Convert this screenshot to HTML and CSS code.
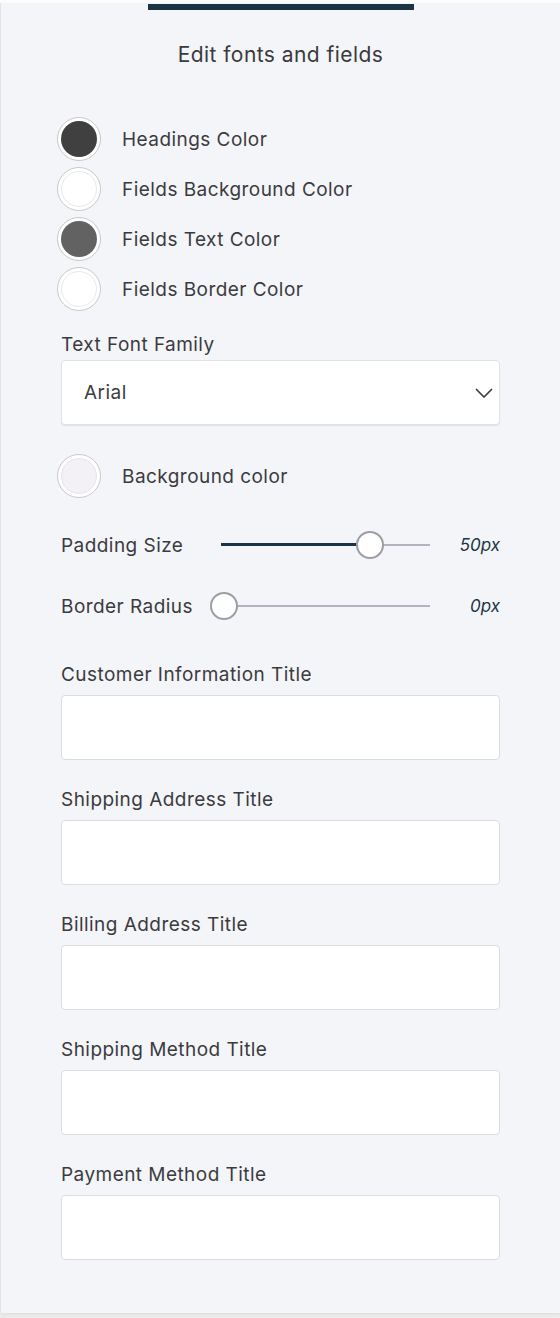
FILE: index.html
```html
<!DOCTYPE html>
<html lang="en">

<head>
    <meta charset="UTF-8">
    <meta name="viewport" content="width=device-width, initial-scale=1.0">
    <title>Edit fonts and fields</title>

    <link rel="stylesheet" href="styles.css">
</head>

<body>

    <main class="panel">
        <div class="tab-bar"></div>
        <h2>Edit fonts and fields</h2>

        <!-- Color pickers -->
        <div class="swatches">
            <div class="swatch-row">
                <span class="swatch"><span class="dot dark"></span></span>
                <span class="swatch-label">Headings Color</span>
            </div>
            <div class="swatch-row">
                <span class="swatch"><span class="dot white"></span></span>
                <span class="swatch-label">Fields Background Color</span>
            </div>
            <div class="swatch-row">
                <span class="swatch"><span class="dot grey"></span></span>
                <span class="swatch-label">Fields Text Color</span>
            </div>
            <div class="swatch-row">
                <span class="swatch"><span class="dot white"></span></span>
                <span class="swatch-label">Fields Border Color</span>
            </div>
        </div>

        <label class="field-label font-label">Text Font Family</label>
        <div class="select">
            <span>Arial</span>
            <svg width="18" height="10" viewBox="0 0 18 10">
                <polyline points="1,1 9,9 17,1" fill="none" stroke="#3a3a3c" stroke-width="1.6" />
            </svg>
        </div>

        <div class="swatch-row bg-row">
            <span class="swatch"><span class="dot light"></span></span>
            <span class="swatch-label">Background color</span>
        </div>

        <!-- Sliders -->
        <div class="slider-row">
            <span class="slider-label">Padding Size</span>
            <div class="slider">
                <div class="track"></div>
                <div class="fill" style="width: 149px"></div>
                <div class="thumb" style="left: 146px"></div>
            </div>
            <span class="slider-value">50px</span>
        </div>
        <div class="slider-row">
            <span class="slider-label">Border Radius</span>
            <div class="slider">
                <div class="track"></div>
                <div class="thumb" style="left: 0px"></div>
            </div>
            <span class="slider-value">0px</span>
        </div>

        <!-- Titles -->
        <div class="titles">
            <div class="form-input">
                <label class="field-label">Customer Information Title</label>
                <input type="text">
            </div>
            <div class="form-input">
                <label class="field-label">Shipping Address Title</label>
                <input type="text">
            </div>
            <div class="form-input">
                <label class="field-label">Billing Address Title</label>
                <input type="text">
            </div>
            <div class="form-input">
                <label class="field-label">Shipping Method Title</label>
                <input type="text">
            </div>
            <div class="form-input">
                <label class="field-label">Payment Method Title</label>
                <input type="text">
            </div>
        </div>
    </main>

</body>

</html>
```

FILE: styles.css
```css
* {
    box-sizing: border-box;
    padding: 0;
    margin: 0;
}

body {
    background: linear-gradient(#fdfdfd 3px, #ebebeb 3px);
    min-height: 100vh;
    padding-top: 3px;
    font-family: 'Inter', 'Roboto', sans-serif;
    letter-spacing: 0.45px;
    color: #3b3b3e;
}

.panel {
    background: #f4f5f9;
    border-left: 1px solid #e3e4e9;
    padding: 1px 60px 53px 60px;
    box-shadow: 0 1px 3px rgba(0, 0, 0, 0.06);
}

.tab-bar {
    width: 266px;
    height: 6px;
    margin: 0 auto;
    background: #1b3544;
}

h2 {
    font-size: 21px;
    font-weight: 400;
    line-height: 24px;
    text-align: center;
    margin-top: 33px;
    color: #3a3a3c;
}

/* Swatches */
.swatches {
    display: flex;
    flex-direction: column;
    gap: 6px;
    margin-top: 50px;
}

.swatch-row {
    display: flex;
    align-items: center;
    gap: 21px;
    margin-left: -4px;
}

.swatch {
    width: 44px;
    height: 44px;
    border-radius: 50%;
    border: 1px solid #c9c9cc;
    background: #fff;
    display: flex;
    align-items: center;
    justify-content: center;
    flex-shrink: 0;
}

.dot {
    width: 36px;
    height: 36px;
    border-radius: 50%;
}

.dot.dark {
    background: #404040;
}

.dot.grey {
    background: #626262;
}

.dot.white {
    background: #fff;
    border: 1px solid #e8e8ea;
}

.dot.light {
    background: #f3f1f5;
    border: 1px solid #e6e4e8;
}

.swatch-label {
    font-size: 19px;
    line-height: 22px;
    padding-top: 1px;
}

/* Labels and fields */
.field-label {
    display: block;
    font-size: 19px;
    line-height: 22px;
    padding-top: 1px;
}

.font-label {
    margin-top: 22px;
}

.select {
    margin-top: 4px;
    height: 65px;
    background: #fff;
    border: 1px solid #e2e2e6;
    border-radius: 4px;
    box-shadow: 0 1px 1px rgba(0, 0, 0, 0.08);
    display: flex;
    align-items: center;
    justify-content: space-between;
    padding: 0 6px 0 22px;
    font-size: 19px;
}

.bg-row {
    margin-top: 29px;
}

/* Sliders */
.slider-row {
    display: flex;
    align-items: center;
    height: 28px;
    margin-top: 33px;
}

.slider-label {
    width: 149px;
    font-size: 19px;
    padding-top: 1px;
}

.slider {
    position: relative;
    width: 220px;
    height: 28px;
}

.slider .track {
    position: absolute;
    left: 11px;
    right: 0;
    top: 13px;
    height: 2px;
    background: #b4b4c0;
}

.slider .fill {
    position: absolute;
    left: 11px;
    top: 12px;
    height: 3px;
    background: #1b3544;
}

.slider .thumb {
    position: absolute;
    top: 0;
    width: 28px;
    height: 28px;
    border-radius: 50%;
    background: #fff;
    border: 2px solid #9d9da5;
}

.slider-value {
    flex: 1;
    text-align: right;
    font-size: 17px;
    font-style: italic;
    letter-spacing: 0;
    color: #1c3545;
}

.titles {
    margin-top: 43px;
    display: flex;
    flex-direction: column;
    gap: 28px;
}

.form-input input {
    display: block;
    width: 100%;
    height: 65px;
    margin-top: 9px;
    background: #fff;
    border: 1px solid #dcdce0;
    border-radius: 4px;
}
```
